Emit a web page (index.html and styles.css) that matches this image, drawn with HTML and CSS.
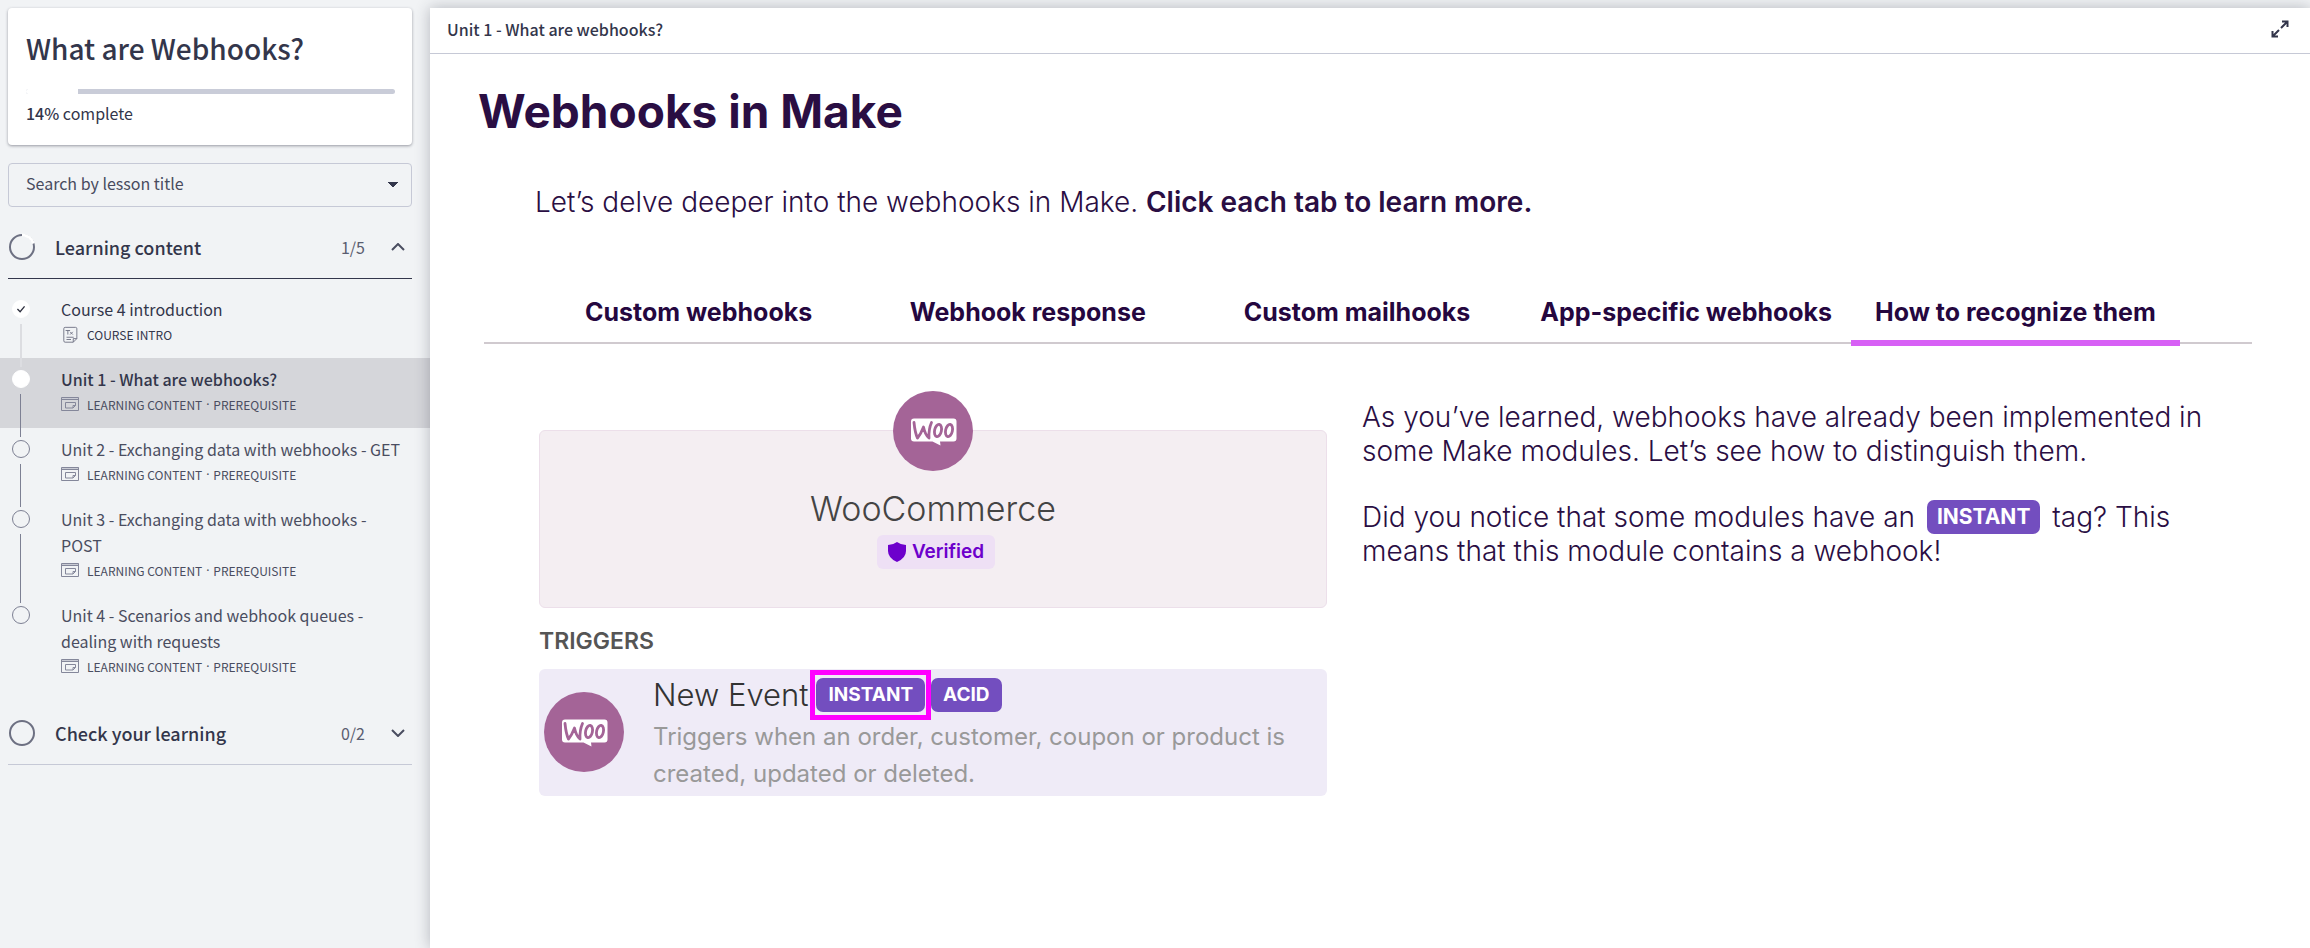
FILE: index.html
```html
<!DOCTYPE html>
<html lang="en">
<head>
<meta charset="utf-8">
<title>What are Webhooks?</title>
<link rel="stylesheet" href="styles.css">
</head>
<body>
<svg class="defs" aria-hidden="true">
  <symbol id="woo" viewBox="0 0 80 80">
    <circle cx="40" cy="40" r="40" fill="#a46497"/>
    <path d="M21 27.500h39.500q3 0 3 3v17q0 3-3 3h-13.500l.5 4-8-4h-18.500q-3 0-3-3v-17q0-3 3-3z" fill="#fff"/>
    <g fill="none" stroke="#a46497" stroke-width="2.800" stroke-linecap="round" stroke-linejoin="round">
      <path d="M21 31.500c.6 6 1.500 11.500 3.500 15.500 3-3.500 4.500-7 6-11 1 5 2.500 8.500 5.500 11-.3-6 .5-11 2.500-15.500"/>
      <ellipse cx="45" cy="39.500" rx="3.400" ry="6.200" transform="rotate(12 45 39.500)"/>
      <ellipse cx="56" cy="39.500" rx="3.400" ry="6.200" transform="rotate(12 56 39.500)"/>
    </g>
  </symbol>
  <symbol id="page" viewBox="0 0 20 18">
    <path d="M1 1h17v3H1z" fill="#c9cbd4"/>
    <path d="M.5 1.500h17v13H.5zM.5 3.500h17M4.500 6.500h10v3l-2.500 2.500h-7.500zM14.500 9.500h-2.500v2.500" fill="none" stroke="#84879a"/>
  </symbol>
  <symbol id="doc" viewBox="0 0 20 20">
    <path d="M3.500 1.500h11.500q1.500 0 1.500 1.500v11l-4 4h-9q-1.500 0-1.500-1.500v-13.500q0-1.500 1.500-1.500zM16.500 14h-4v4M5 12.500h8M5 15h5M4 5h5M6.500 5v4.500M9 6.500l3 3M12 6.500l-3 3" fill="none" stroke="#6e7182"/>
  </symbol>
</svg>
<div class="app">
  <aside class="sidebar">
    <section class="card">
      <h1 class="card-title">What are Webhooks?</h1>
      <div class="progress"><div class="progress-done" style="width:14%"></div></div>
      <p class="progress-text"><b>14%</b> complete</p>
    </section>
    <select class="search" aria-label="Search by lesson title"><option>Search by lesson title</option></select>
    <button class="section open" aria-expanded="true">
      <svg class="ring" viewBox="0 0 28 28"><circle cx="14" cy="14" r="12" fill="none" stroke="#6d7082" stroke-width="2"/><path d="M14 2a12 12 0 0 1 11.500 8.500" fill="none" stroke="#fff" stroke-width="3"/></svg>
      <span class="section-name">Learning content</span><span class="count">1/5</span>
      <svg class="chev" viewBox="0 0 14 8"><path d="M1 7l6-6 6 6"/></svg>
    </button>
    <ul class="lessons">
      <li><a class="lesson" href="#intro"><span class="track light"><span class="dot done"><svg viewBox="0 0 18 18"><path d="M5 9l3 3 5-6" fill="none" stroke="#2d2f3e" stroke-width="1.500"/></svg></span></span>
        <span class="info"><span class="name dark">Course 4 introduction</span><span class="meta dark"><svg class="kind"><use href="#doc"/></svg>COURSE INTRO</span></span></a></li>
      <li><a class="lesson active" href="#u1"><span class="track"><span class="dot done"></span></span>
        <span class="info"><span class="name">Unit 1 - What are webhooks?</span><span class="meta"><svg class="kind"><use href="#page"/></svg>LEARNING CONTENT<span class="sep">·</span>PREREQUISITE</span></span></a></li>
      <li><a class="lesson" href="#u2"><span class="track"><span class="dot"></span></span>
        <span class="info"><span class="name">Unit 2 - Exchanging data with webhooks - GET</span><span class="meta"><svg class="kind"><use href="#page"/></svg>LEARNING CONTENT<span class="sep">·</span>PREREQUISITE</span></span></a></li>
      <li><a class="lesson" href="#u3"><span class="track"><span class="dot"></span></span>
        <span class="info"><span class="name">Unit 3 - Exchanging data with webhooks - POST</span><span class="meta"><svg class="kind"><use href="#page"/></svg>LEARNING CONTENT<span class="sep">·</span>PREREQUISITE</span></span></a></li>
      <li><a class="lesson" href="#u4"><span class="track last"><span class="dot"></span></span>
        <span class="info"><span class="name">Unit 4 - Scenarios and webhook queues - dealing with requests</span><span class="meta"><svg class="kind"><use href="#page"/></svg>LEARNING CONTENT<span class="sep">·</span>PREREQUISITE</span></span></a></li>
    </ul>
    <button class="section" aria-expanded="false">
      <svg class="ring" viewBox="0 0 28 28"><circle cx="14" cy="14" r="12" fill="none" stroke="#6d7082" stroke-width="2"/></svg>
      <span class="section-name">Check your learning</span><span class="count">0/2</span>
      <svg class="chev" viewBox="0 0 14 8"><path d="M1 1l6 6 6-6"/></svg>
    </button>
  </aside>
  <main class="main">
    <header class="topbar">
      <span>Unit 1 - What are webhooks?</span>
      <button class="expand" aria-label="Full screen"><svg viewBox="0 0 18 18"><path d="M11 1.500h5.500V7M16 2l-6 6M1.500 11v5.500H7M2 16l6-6"/></svg></button>
    </header>
    <article class="content">
      <h2 class="title">Webhooks in Make</h2>
      <p class="intro">Let’s delve deeper into the webhooks in Make. <b>Click each tab to learn more.</b></p>
      <nav class="tabs" role="tablist">
        <button class="tab" role="tab">Custom webhooks</button>
        <button class="tab" role="tab">Webhook response</button>
        <button class="tab" role="tab">Custom mailhooks</button>
        <button class="tab" role="tab">App-specific webhooks</button>
        <button class="tab current" role="tab" aria-selected="true">How to recognize them</button>
      </nav>
      <div class="panel">
        <div class="demo">
          <section class="woo-card">
            <svg class="woo"><use href="#woo"/></svg>
            <h3 class="woo-name">WooCommerce</h3>
            <span class="verified"><svg viewBox="0 0 18 20"><path d="M9 0q4 3 9 3v6q0 7-9 11-9-4-9-11V3q5 0 9-3z" fill="#6d00cc"/></svg>Verified</span>
          </section>
          <h4 class="triggers">TRIGGERS</h4>
          <section class="event">
            <svg class="woo"><use href="#woo"/></svg>
            <div class="event-body">
              <div class="event-head"><span class="event-name">New Event</span><span class="highlight"><span class="tag">INSTANT</span></span><span class="tag">ACID</span></div>
              <p class="event-text">Triggers when an order, customer, coupon or product is created, updated or deleted.</p>
            </div>
          </section>
        </div>
        <div class="copy">
          <p>As you’ve learned, webhooks have already been implemented in some Make modules. Let’s see how to distinguish them.</p>
          <p>Did you notice that some modules have an <span class="tag inline">INSTANT</span> tag? This means that this module contains a webhook!</p>
        </div>
      </div>
    </article>
  </main>
</div>
</body>
</html>
```
FILE: styles.css
```css
* { box-sizing: border-box; }
body, h1, h2, h3, h4, p, ul { margin: 0; padding: 0; }
body {
  background: #f1f3f5;
  color: #33364b;
  font-family: "Noto Sans CJK SC", sans-serif;
  font-size: 16px;
  line-height: 26px;
}
button { border: 0; background: none; padding: 0; font: inherit; color: inherit; text-align: left; }
.defs { position: absolute; width: 0; height: 0; }
.app { display: flex; min-height: 100vh; }

.sidebar { flex: 0 0 430px; padding-top: 8px; }
.card {
  margin: 0 18px 18px 8px;
  padding: 19px 17px 22px 18px;
  background: #fff;
  border-radius: 4px;
  box-shadow: 0 1px 3px rgba(40, 42, 60, .45);
}
.card-title { font-size: 28px; line-height: 42px; font-weight: 500; }
.progress { height: 5px; margin: 20px 0 9px; border-radius: 3px; background: #c9ccd8; overflow: hidden; }
.progress-done { height: 100%; background: #fff; }
.progress-text { line-height: 20px; }
.progress-text b { font-weight: 500; }
.search {
  display: block;
  width: calc(100% - 26px);
  height: 44px;
  margin: 0 18px 17px 8px;
  padding: 0 17px 4px;
  appearance: none;
  border: 1px solid #c6c9d6;
  border-radius: 4px;
  background: conic-gradient(from 321deg at 50% 100%, #33364b 78deg, transparent 0) no-repeat right 14px center / 10px 6px;
  background: linear-gradient(to bottom left, #33364b 50%, transparent 50%) no-repeat right 13px center / 5px 6px, linear-gradient(to bottom right, #33364b 50%, transparent 50%) no-repeat right 18px center / 5px 6px;
  color: #484b5e;
  font: inherit;
}
.search {
  background: linear-gradient(to bottom right, #33364b 50%, transparent 50%) no-repeat right 13px center / 5px 6px, linear-gradient(to bottom left, #33364b 50%, transparent 50%) no-repeat right 18px center / 5px 6px;
}
.section {
  display: flex;
  align-items: center;
  width: calc(100% - 26px);
  height: 55px;
  margin-left: 8px;
  padding-bottom: 9px;
  border-bottom: 1px solid #c6c9d6;
}
.section.open { border-color: #33364b; }
.ring { width: 28px; height: 28px; margin-right: 19px; }
.section-name { flex: 1; font-size: 18px; font-weight: 500; }
.count { margin-right: 26px; color: #5a5d70; }
.chev { width: 14px; height: 8px; margin-right: 7px; fill: none; stroke: #4a4d60; stroke-width: 2; }
.lessons { list-style: none; padding: 9px 0 20px; }
.lessons li:first-child { padding-bottom: 0; }
.lesson { display: flex; color: #4a4d60; text-decoration: none; }
.lesson.active { background: #d5d6da; }
.lesson.active .name { font-weight: 500; color: #33364b; }
.track { position: relative; flex: 0 0 61px; }
.track::after { content: ""; position: absolute; left: 20px; top: 36px; bottom: -9px; width: 1px; background: #7d8093; }
.track.light::after { background: #dcdde1; width: 2px; }
.track.last::after { display: none; }
.dot { position: absolute; left: 12px; top: 12px; width: 18px; height: 18px; border: 1px solid #7d8093; border-radius: 50%; }
.dot.done { background: #fff; border-color: #fff; }
.dot svg { display: block; width: 16px; height: 16px; }
.info { flex: 1; display: flex; flex-direction: column; gap: 3px; padding: 8px 28px 13px 0; }
.meta { display: flex; align-items: center; height: 20px; font-size: 12px; line-height: 20px; }
.sep { width: 11px; text-align: center; font-family: "Noto Sans", sans-serif; }
.kind { width: 20px; height: 18px; margin-right: 6px; }
.dark { color: #33364b; }

.main { flex: 1; min-width: 0; margin-top: 8px; background: #fff; box-shadow: 0 0 14px rgba(40, 42, 60, .3); }
.topbar { display: flex; justify-content: space-between; align-items: center; height: 46px; padding: 0 21px 3px 17px; border-bottom: 1px solid #c6c9d6; font-weight: 500; }
.expand { width: 18px; height: 18px; }
.expand svg { display: block; width: 18px; height: 18px; fill: none; stroke: #33364b; stroke-width: 2; }
.content { padding: 27px 58px 0 54px; color: #2a0e43; font-family: Inter, sans-serif; }
.title { margin-left: -6px; font-size: 46px; line-height: 60px; font-weight: 700; }
.intro { margin: 41px 0 0 51px; font-size: 28px; line-height: 40px; font-weight: 300; }
.intro b { font-weight: 600; }
.tabs { display: grid; grid-template-columns: repeat(5, 1fr); margin-top: 66px; padding: 0 72px 0 50px; box-shadow: inset 0 -2px #d0cacf; }
.tab { height: 58px; padding-bottom: 4px; text-align: center; font-size: 25px; font-weight: 700; white-space: nowrap; border-bottom: 6px solid transparent; color: #25073f; }
.tabs .tab { margin-bottom: -2px; }
.tab.current { border-color: #d760f5; }
.panel { display: grid; grid-template-columns: 788fr 858fr; gap: 35px; padding: 46px 32px 0 55px; }
.woo { display: block; width: 80px; height: 80px; flex: none; }
.woo-card { display: flex; flex-direction: column; align-items: center; margin-top: 40px; padding-bottom: 38px; background: #f4eef2; border: 1px solid #ecdfea; border-radius: 6px; }
.woo-card .woo { margin-top: -40px; }
.woo-name { margin-top: 17px; font-size: 34px; line-height: 42px; font-weight: 300; color: #444; }
.verified { display: flex; align-items: center; gap: 6px; height: 34px; margin: 5px 0 0 6px; padding: 0 11px; border-radius: 6px; background: #eee0f5; color: #6d00cc; font-size: 19px; font-weight: 600; }
.verified svg { width: 18px; height: 20px; }
.triggers { margin: 20px 0 15px; font-size: 23px; font-weight: 600; color: #555; }
.event { display: flex; align-items: center; padding: 3px 5px 4px; border-radius: 6px; background: #efebf7; }
.event-body { flex: 1; margin-left: 29px; }
.event-head { display: flex; align-items: center; height: 46px; }
.event-name { font-size: 31px; font-weight: 300; color: #333; white-space: nowrap; }
.highlight { margin-left: 2px; border: 5px solid #ff00ff; padding: 3px 1px; }
.tag { display: flex; align-items: center; height: 34px; padding: 0 12px; border-radius: 7px; background: #734ebf; color: #fff; font-size: 19px; font-weight: 700; }
.tag.inline { display: inline-flex; margin: 0 4px; padding: 0 10px; font-size: 21px; line-height: 34px; vertical-align: bottom; }
.event-text { font-size: 24px; line-height: 37px; color: #999; }
.copy { padding-top: 10px; font-size: 28px; line-height: 34px; font-weight: 300; }
.copy p + p { margin-top: 32px; }
```
